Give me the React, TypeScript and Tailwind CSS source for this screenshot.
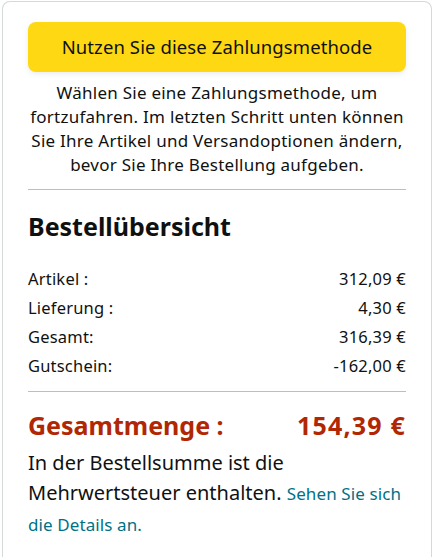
export default function App() {
  const rows = [
    { label: 'Artikel :', value: '312,09 €' },
    { label: 'Lieferung :', value: '4,30 €' },
    { label: 'Gesamt:', value: '316,39 €' },
    { label: 'Gutschein:', value: '-162,00 €' },
  ];

  return (
    <div className="min-h-[557px] bg-white pl-[2px] pt-[1px] font-['Noto_Sans',sans-serif] text-[#0f1111]">
      <div className="min-h-[560px] rounded-t-lg border border-r-[#d5d9d9] border-l-[#d5d9d9] border-t-[#d5d9d9] border-b-transparent px-[25px] pt-[20px]">
        <button className="h-[50px] w-full rounded-lg bg-[#ffd814] text-[18.5px] tracking-[0.1px] text-[#0f1111] shadow-[0_2px_5px_rgba(213,217,217,0.5)]">
          Nutzen Sie diese Zahlungsmethode
        </button>
        <p className="mt-[9px] text-center text-[17px] leading-[24px] tracking-[0.25px]">
          Wählen Sie eine Zahlungsmethode, um
          <br />
          fortzufahren. Im letzten Schritt unten können
          <br />
          Sie Ihre Artikel und Versandoptionen ändern,
          <br />
          bevor Sie Ihre Bestellung aufgeben.
        </p>
        <div className="mt-[12px] border-t border-[#bbbfbf]" />

        <h2 className="mt-[20px] text-[25px] font-bold leading-[32px]">Bestellübersicht</h2>

        <div className="mt-[25px] flex flex-col gap-[5px] text-[16.5px] leading-[24px] tracking-[0.2px]">
          {rows.map((r) => (
            <div key={r.label} className="flex justify-between">
              <span>{r.label}</span>
              <span>{r.value}</span>
            </div>
          ))}
        </div>
        <div className="mt-[13px] border-t border-[#bbbfbf]" />

        <div className="mt-[18px] flex justify-between text-[25px] font-bold leading-[30px] text-[#b12704]">
          <span>Gesamtmenge :</span>
          <span className="tracking-[1.2px]">154,39 €</span>
        </div>

        <p className="mt-[8px] text-[20px] leading-[30px]">
          <span className="whitespace-nowrap">In der Bestellsumme ist die</span>
          <br />
          <span className="whitespace-nowrap">
            Mehrwertsteuer enthalten.{' '}
            <a href="#" className="text-[17px] tracking-[0.1px] text-[#007185]">Sehen Sie sich</a>
          </span>
          <br />
          <a href="#" className="text-[17px] tracking-[0.1px] text-[#007185]">die Details an.</a>
        </p>
      </div>
    </div>
  );
}
